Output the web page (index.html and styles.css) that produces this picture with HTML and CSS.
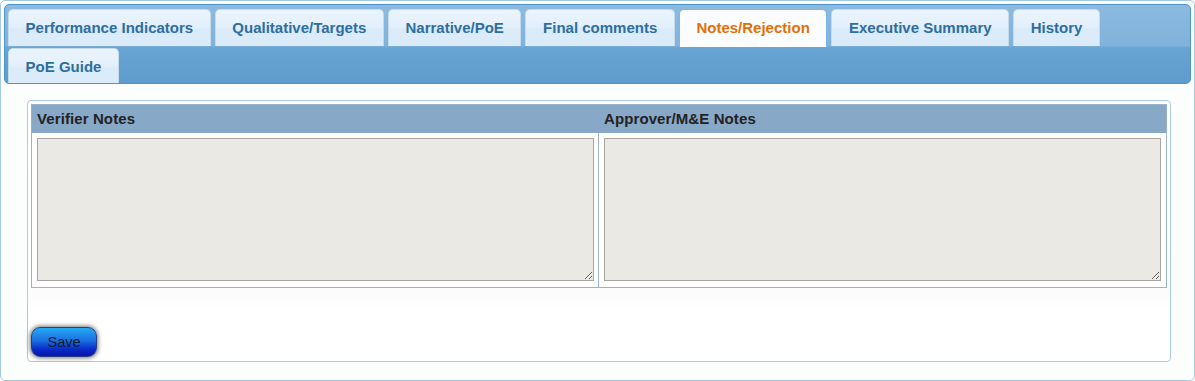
FILE: index.html
```html
<!DOCTYPE html>
<html lang="en">
<head>
<meta charset="utf-8">
<title>Notes/Rejection</title>
<link rel="stylesheet" href="styles.css">
</head>
<body>
<div class="widget">
  <ul class="tabs">
    <li class="tab"><a>Performance Indicators</a></li>
    <li class="tab"><a>Qualitative/Targets</a></li>
    <li class="tab"><a>Narrative/PoE</a></li>
    <li class="tab"><a>Final comments</a></li>
    <li class="tab active"><a>Notes/Rejection</a></li>
    <li class="tab"><a>Executive Summary</a></li>
    <li class="tab"><a>History</a></li>
    <li class="tab"><a>PoE Guide</a></li>
  </ul>
  <div class="panel">
    <div class="box">
      <div class="notes">
        <div class="head">Verifier Notes</div>
        <div class="head">Approver/M&amp;E Notes</div>
        <div class="cell first"><textarea class="note"></textarea></div>
        <div class="cell"><textarea class="note"></textarea></div>
      </div>
      <div class="actions">
        <button class="save" type="button">Save</button>
      </div>
    </div>
  </div>
</div>
</body>
</html>
```

FILE: styles.css
```css
* { box-sizing: border-box; }
html, body { margin: 0; padding: 0; background: #ffffff; }
body { font-family: "Liberation Sans", Arial, sans-serif; }

.widget {
  width: 1195px;
  height: 381px;
  border: 1px solid #a6c9e2;
  border-radius: 5px;
  padding: 3px;
  background: #fcfdfd;
  display: flex;
  flex-direction: column;
}

.tabs {
  list-style: none;
  margin: 0;
  height: 80px;
  padding: 4px 3px 0 3px;
  border: 1px solid #4f93ca;
  border-radius: 5px;
  background: linear-gradient(to bottom, #8dbadf 0%, #80b2db 52%, #69a4d2 55%, #5d9ccc 100%);
  display: flex;
  flex-wrap: wrap;
  align-content: flex-start;
  column-gap: 4px;
  row-gap: 1px;
  overflow: hidden;
}

.tab {
  height: 37px;
  border: 1px solid #c5dbec;
  border-bottom: 0;
  border-radius: 5px 5px 0 0;
  background: linear-gradient(to bottom, #ebf4fc 0%, #e2effb 50%, #d9eaf9 52%, #dcecf9 100%);
}

.tab a {
  display: block;
  padding: 0 16.6px;
  line-height: 36px;
  font-size: 15px;
  font-weight: bold;
  color: #2e6e9e;
  white-space: nowrap;
}

.tab.active {
  height: 38px;
  border-color: #79b7e7;
  background: #fbfcfd;
}

.tab.active a { color: #e17009; }

.panel {
  flex: 1;
  padding: 16px 21px 15px 23px;
  display: flex;
}

.box {
  flex: 1;
  border: 1px solid #a9cde0;
  border-radius: 4px;
  padding: 3px 3px 3px 3px;
  background: linear-gradient(to bottom, #ffffff 0%, #fcfcfc 75%, #ffffff 80%);
  display: flex;
  flex-direction: column;
}

.notes {
  display: grid;
  grid-template-columns: 567px 1fr;
  width: 1136px;
  border: 1px solid #9db2c8;
  background: #ffffff;
}

.head {
  height: 28px;
  background: #88a8c8;
  padding: 5px 0 0 5px;
  font-size: 15px;
  font-weight: bold;
  color: #222222;
  line-height: 18px;
  letter-spacing: 0.1px;
}

.cell {
  padding: 5px 4px 6px 5px;
}

.cell.first { border-right: 1px solid #9db2c8; }

.note {
  display: block;
  width: 557px;
  height: 143px;
  margin: 0;
  border: 1px solid #a9a5a3;
  background: #ebe9e4;
  resize: both;
  font-family: "Liberation Sans", Arial, sans-serif;
  font-size: 13px;
}

.actions {
  flex: 1;
  display: flex;
  align-items: flex-end;
  padding-bottom: 1px;
}

.save {
  width: 66px;
  height: 30px;
  padding: 0;
  border: 1px solid #25407a;
  border-radius: 9px;
  background: linear-gradient(to bottom, #26aaf2 0%, #1a6fe0 45%, #0a2cc8 75%, #0812b0 100%);
  box-shadow: 0 0 4px 1px rgba(0, 0, 0, 0.55);
  font-family: "Liberation Sans", Arial, sans-serif;
  font-size: 14.5px;
  color: #0d1a33;
  cursor: pointer;
}
```
